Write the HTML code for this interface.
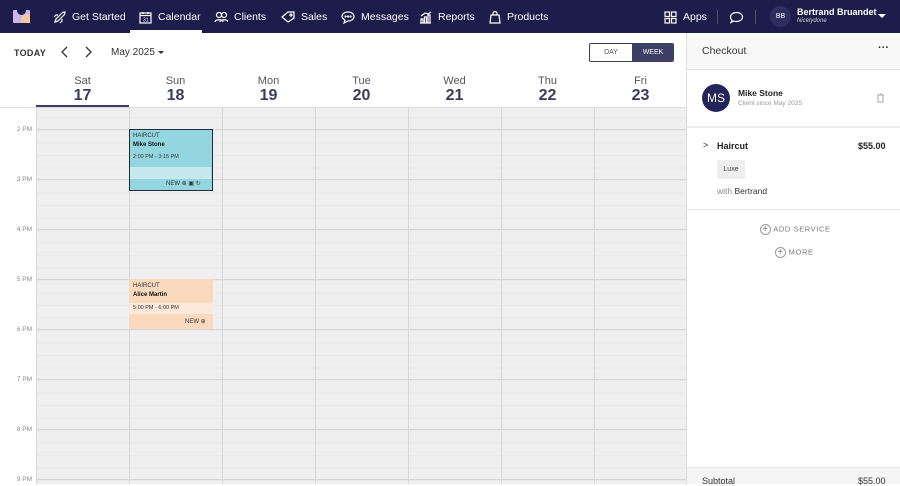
<!DOCTYPE html>
<html><head><meta charset="utf-8"><style>
*{box-sizing:border-box;margin:0;padding:0}
body{width:900px;height:484px;overflow:hidden;font-family:"Liberation Sans",sans-serif;background:#fff;position:relative;color:#2a2b45}
.nav{position:absolute;left:0;top:0;width:900px;height:33px;background:#1c1d4a;color:#fff;font-size:10.5px}
.nav .it{position:absolute;top:0;height:33px;line-height:33px;display:flex;align-items:center;gap:6px;padding-top:1px}
.nav svg{stroke:#fff;fill:none;stroke-width:1.2}
.abs{position:absolute}
.grid{position:absolute;left:36px;top:108px;width:650px;height:376px;background:#efefef;
background-image:linear-gradient(#e9e9e9 1px,transparent 1px);background-size:100% 12.5px;background-position:0 9.5px}
.hl{position:absolute;left:36px;width:650px;height:1px;background:#d6d6d6}
.vl{position:absolute;top:108px;width:1px;height:376px;background:#d6d6d6}
.tl{position:absolute;left:0;width:32px;text-align:right;font-size:6.5px;color:#888}
.day{position:absolute;top:75px;width:93px;text-align:center;color:#3b3c58}
.day .n{font-size:11px;color:#555}
.day .d{font-size:16px;font-weight:bold;color:#3b3c58}
.ev{position:absolute;font-size:6px;color:#333}
</style></head><body>
<div class="nav">
 <div class="abs" style="left:13px;top:10px;width:17px;height:13px;background:#c9b6ec;border-radius:1px"><div class="abs" style="left:8px;top:4px;width:9px;height:9px;background:#f6c99c;border-radius:6px 0 0 0"></div><div class="abs" style="left:4px;top:0;width:9px;height:5px;background:#1c1d4a;border-radius:0 0 5px 5px"></div></div>
 <div class="it" style="left:53px"><svg width="13" height="13" viewBox="0 0 13 13"><path d="M2 11l3-1 6-6c1-1 1-3 1-3s-2 0-3 1L3 8z M5 4H3L1 6 M9 8v2l-2 2"/></svg>Get Started</div>
 <div class="it" style="left:139px"><svg width="13" height="13" viewBox="0 0 13 13"><rect x="1" y="2" width="11" height="10"/><path d="M1 4.5h11M4 1v2M9 1v2"/><text x="4" y="10.5" font-size="5" fill="#fff" stroke="none">31</text></svg>Calendar</div>
 <div class="abs" style="left:130px;top:30px;width:72px;height:3px;background:#fff"></div>
 <div class="it" style="left:214px"><svg width="14" height="12" viewBox="0 0 14 12"><circle cx="5" cy="4" r="2.5"/><circle cx="10" cy="4" r="2.5"/><path d="M1 11c0-3 8-3 8 0M6 11c0-3 8-3 8 0"/></svg>Clients</div>
 <div class="it" style="left:281px"><svg width="14" height="12" viewBox="0 0 14 12"><path d="M1 6l6-5h6v6l-6 4z"/><circle cx="10" cy="4" r="1"/></svg>Sales</div>
 <div class="it" style="left:341px"><svg width="14" height="13" viewBox="0 0 14 13"><path d="M7 1c3.5 0 6 2 6 4.5S10.5 10 7 10L3 12l1-3C2 8 1 7 1 5.5 1 3 3.5 1 7 1z"/><circle cx="4.5" cy="5.5" r=".5"/><circle cx="7" cy="5.5" r=".5"/><circle cx="9.5" cy="5.5" r=".5"/></svg>Messages</div>
 <div class="it" style="left:419px"><svg width="13" height="13" viewBox="0 0 13 13"><path d="M1 12h11M2 12V8h2v4M5.5 12V6h2v6M9 12V4h2v8M2 5l4-3 3 1 3-2"/></svg>Reports</div>
 <div class="it" style="left:489px"><svg width="12" height="13" viewBox="0 0 12 13"><path d="M2 4h8l1 8H1z M4 4V2.5a2 2 0 014 0V4"/></svg>Products</div>
 <div class="it" style="left:664px"><svg width="13" height="13" viewBox="0 0 13 13"><rect x="1" y="1" width="4.5" height="4.5"/><rect x="7.5" y="1" width="4.5" height="4.5"/><rect x="1" y="7.5" width="4.5" height="4.5"/><rect x="7.5" y="7.5" width="4.5" height="4.5"/></svg>Apps</div>
 <div class="abs" style="left:717px;top:10px;width:1px;height:14px;background:#555"></div>
 <div class="it" style="left:729px"><svg width="15" height="13" viewBox="0 0 15 13"><path d="M7.5 1.5c3.5 0 6 2 6 4.5s-2.5 4.5-6 4.5c-1 0-2-.2-2.8-.5L2 11.5l1-2.3C2 8.3 1.5 7.2 1.5 6c0-2.5 2.5-4.5 6-4.5z"/></svg></div>
 <div class="abs" style="left:755px;top:10px;width:1px;height:14px;background:#555"></div>
 <div class="abs" style="left:770px;top:6px;width:21px;height:21px;border-radius:50%;background:#2d2e5e;font-size:7px;text-align:center;line-height:21px">BB</div>
 <div class="abs" style="left:797px;top:7px;font-size:9px;font-weight:bold">Bertrand Bruandet</div>
 <div class="abs" style="left:797px;top:18px;font-size:6px;font-style:italic;color:#ccc">Nicelydone</div>
 <div class="abs" style="left:878px;top:14px;border:4px solid transparent;border-top:4px solid #fff"></div>
</div>

<div class="abs" style="left:14px;top:48px;font-size:9px;font-weight:bold;color:#333;letter-spacing:.3px">TODAY</div>
<svg class="abs" style="left:60px;top:46px" width="36" height="12" viewBox="0 0 36 12"><path d="M7 1L2 6l5 5M26 1l5 5-5 5" stroke="#333" stroke-width="1.3" fill="none"/></svg>
<div class="abs" style="left:111px;top:47px;font-size:10px;color:#333">May 2025</div>
<div class="abs" style="left:158px;top:51px;border:3px solid transparent;border-top:3px solid #333"></div>
<div class="abs" style="left:589px;top:43px;width:85px;height:19px;border:1px solid #3d3f66;border-radius:2px;font-size:7px;overflow:hidden">
 <div class="abs" style="left:0;top:0;width:42px;height:17px;line-height:17px;text-align:center;color:#555">DAY</div>
 <div class="abs" style="left:42px;top:0;width:42px;height:17px;line-height:17px;text-align:center;background:#3d3f66;color:#fff">WEEK</div>
</div>

<div class="day" style="left:36px"><div class="n">Sat</div><div class="d">17</div></div>
<div class="day" style="left:129px"><div class="n">Sun</div><div class="d">18</div></div>
<div class="day" style="left:222px"><div class="n">Mon</div><div class="d">19</div></div>
<div class="day" style="left:315px"><div class="n">Tue</div><div class="d">20</div></div>
<div class="day" style="left:408px"><div class="n">Wed</div><div class="d">21</div></div>
<div class="day" style="left:501px"><div class="n">Thu</div><div class="d">22</div></div>
<div class="day" style="left:594px"><div class="n">Fri</div><div class="d">23</div></div>
<div class="abs" style="left:36px;top:105px;width:93px;height:3px;background:#3d3f66"></div>
<div class="abs" style="left:0;top:107px;width:686px;height:1px;background:#ddd"></div>

<div class="grid"></div>
<div class="hl" style="top:129px"></div><div class="hl" style="top:179px"></div><div class="hl" style="top:229px"></div><div class="hl" style="top:279px"></div><div class="hl" style="top:329px"></div><div class="hl" style="top:379px"></div><div class="hl" style="top:429px"></div><div class="hl" style="top:479px"></div>
<div class="vl" style="left:36px"></div><div class="vl" style="left:129px"></div><div class="vl" style="left:222px"></div><div class="vl" style="left:315px"></div><div class="vl" style="left:408px"></div><div class="vl" style="left:501px"></div><div class="vl" style="left:594px"></div>
<div class="tl" style="top:126px">2 PM</div><div class="tl" style="top:176px">3 PM</div><div class="tl" style="top:226px">4 PM</div><div class="tl" style="top:276px">5 PM</div><div class="tl" style="top:326px">6 PM</div><div class="tl" style="top:376px">7 PM</div><div class="tl" style="top:426px">8 PM</div><div class="tl" style="top:476px">9 PM</div>

<div class="ev" style="left:129px;top:129px;width:84px;height:62px;background:#93d6df;border:1.5px solid #1f2a3f">
 <div class="abs" style="left:0;top:37px;width:81px;height:12px;background:#c5e9ee"></div>
 <div class="abs" style="left:3px;top:3px">HAIRCUT</div>
 <div class="abs" style="left:3px;top:12px;font-weight:bold;color:#111">Mike Stone</div>
 <div class="abs" style="left:3px;top:24px;font-size:5.5px">2:00 PM - 3:15 PM</div>
 <div class="abs" style="left:36px;top:50px">NEW ⊕ ▣ ↻</div>
</div>
<div class="ev" style="left:129px;top:279px;width:84px;height:50px;background:#fad9bc">
 <div class="abs" style="left:0;top:24px;width:84px;height:11px;background:#fce9da"></div>
 <div class="abs" style="left:4px;top:4px">HAIRCUT</div>
 <div class="abs" style="left:4px;top:13px;font-weight:bold;color:#111">Alice Martin</div>
 <div class="abs" style="left:4px;top:26px;font-size:5.5px">5:00 PM - 6:00 PM</div>
 <div class="abs" style="left:56px;top:39px">NEW ⊕</div>
</div>

<div class="abs" style="left:686px;top:33px;width:214px;height:451px;border-left:1px solid #ddd;background:#fff">
 <div class="abs" style="left:0;top:0;width:214px;height:37px;background:#f8f8f8;border-bottom:1px solid #e3e3e3"></div>
 <div class="abs" style="left:15px;top:12px;font-size:10.5px;color:#333">Checkout</div>
 <div class="abs" style="left:191px;top:9px;font-size:11px;font-weight:bold;color:#333">···</div>
 <div class="abs" style="left:15px;top:51px;width:28px;height:28px;border-radius:50%;background:#22245a;color:#fff;font-size:12px;text-align:center;line-height:28px">MS</div>
 <div class="abs" style="left:51px;top:55px;font-size:8.5px;font-weight:bold;color:#222">Mike Stone</div>
 <div class="abs" style="left:51px;top:67px;font-size:6.5px;color:#999">Client since May 2025</div>
 <svg class="abs" style="left:189px;top:60px" width="9" height="10" viewBox="0 0 9 10"><path d="M1 2h7M2 2v7h5V2M3.5 1h2" stroke="#aaa" fill="none"/></svg>
 <div class="abs" style="left:0;top:93px;width:214px;height:2px;background:#eee"></div>
 <div class="abs" style="left:16px;top:107px;font-size:9px;color:#333">&gt;</div>
 <div class="abs" style="left:30px;top:108px;font-size:9px;font-weight:bold;color:#222">Haircut</div>
 <div class="abs" style="left:171px;top:108px;font-size:9px;font-weight:bold;color:#222">$55.00</div>
 <div class="abs" style="left:30px;top:127px;width:28px;height:19px;background:#eee;border-radius:2px;font-size:7px;text-align:center;line-height:19px;color:#444">Luxe</div>
 <div class="abs" style="left:30px;top:153px;font-size:8.5px;color:#888">with <span style="color:#333">Bertrand</span></div>
 <div class="abs" style="left:0;top:176px;width:214px;height:1px;background:#e6e6e6"></div>
 <div class="abs" style="left:73px;top:191px;font-size:7.5px;color:#777;letter-spacing:.6px"><span style="display:inline-block;width:11px;height:11px;border:1px solid #999;border-radius:50%;text-align:center;line-height:9px;font-size:10px;vertical-align:middle">+</span> ADD SERVICE</div>
 <div class="abs" style="left:88px;top:214px;font-size:7.5px;color:#777;letter-spacing:.6px"><span style="display:inline-block;width:11px;height:11px;border:1px solid #999;border-radius:50%;text-align:center;line-height:9px;font-size:10px;vertical-align:middle">+</span> MORE</div>
 <div class="abs" style="left:0;top:434px;width:214px;height:17px;background:#f5f5f5;border-top:1px solid #e6e6e6"></div>
 <div class="abs" style="left:15px;top:443px;font-size:9px;color:#333">Subtotal</div>
 <div class="abs" style="left:171px;top:443px;font-size:9px;color:#333">$55.00</div>
</div>
</body></html>
